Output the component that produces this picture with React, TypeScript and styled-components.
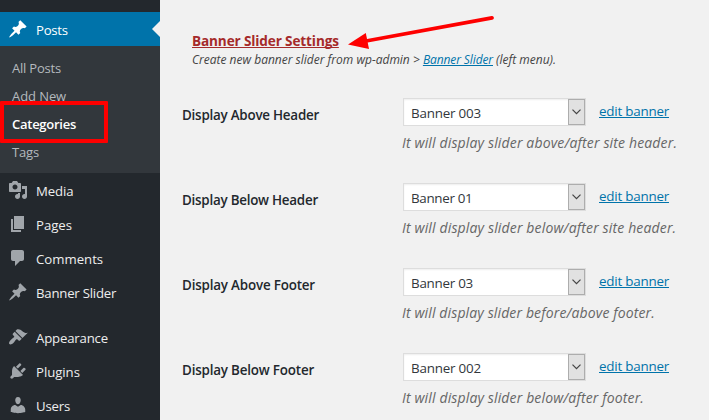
import React from "react";
import styled, { createGlobalStyle } from "styled-components";

const GlobalStyle = createGlobalStyle`
  *, *::before, *::after { box-sizing: border-box; }
  body {
    margin: 0;
    overflow: hidden;
    background: #f1f1f1;
    font-family: "Open Sans", "Noto Sans", sans-serif;
  }
`;

const Page = styled.div`
  display: flex;
  position: relative;
  width: 709px;
  height: 420px;
  overflow: hidden;
  background: #f1f1f1;
`;

const Sidebar = styled.nav`
  flex: none;
  width: 160px;
  height: 420px;
  padding-top: 12px;
  overflow: hidden;
  background: #23282d;
`;

const MenuRow = styled.div<{ $active?: boolean }>`
  position: relative;
  display: flex;
  align-items: center;
  gap: 8px;
  height: 34px;
  padding-left: 8px;
  color: ${(p) => (p.$active ? "#fff" : "#eee")};
  background: ${(p) => (p.$active ? "#0073aa" : "transparent")};
`;

const MenuLabel = styled.span<{ $track: number }>`
  font-size: 13.2px;
  line-height: 18px;
  padding-top: 1px;
  white-space: nowrap;
  letter-spacing: ${(p) => p.$track}px;
`;

const Notch = styled.span`
  position: absolute;
  right: 0;
  top: 9px;
  border: 8px solid transparent;
  border-left-width: 0;
  border-right-color: #f1f1f1;
`;

const MenuIcon = styled.svg<{ $active?: boolean }>`
  flex: none;
  width: 20px;
  height: 20px;
  fill: ${(p) => (p.$active ? "#fff" : "#a0a5aa")};
`;

const Separator = styled.div`
  height: 11px;
`;

const SubMenu = styled.div`
  height: 127px;
  padding: 8px 0 7px 12px;
  background: #32373c;
`;

const SubItem = styled.div<{ $current?: boolean; $track: number }>`
  height: 28px;
  font-size: 13px;
  line-height: 28px;
  font-weight: ${(p) => (p.$current ? 600 : 400)};
  color: ${(p) => (p.$current ? "#fff" : "#b4b9be")};
  letter-spacing: ${(p) => p.$track}px;
`;

const Highlight = styled.div`
  position: absolute;
  left: 0;
  top: 101px;
  width: 108px;
  height: 42px;
  border: 4px solid #fe0000;
  border-radius: 1px;
`;

const PointerArrow = styled.svg`
  position: absolute;
  left: 340px;
  top: 10px;
  width: 160px;
  height: 44px;
`;

const Content = styled.main`
  flex: 1;
  padding-left: 22px;
`;

const Intro = styled.header`
  height: 83px;
  padding: 31px 0 0 10px;
`;

const Title = styled.h2`
  margin: 0 0 1px;
  font-size: 13.6px;
  font-weight: 700;
  line-height: 19px;
  letter-spacing: -0.14px;
  color: #a52a2a;
  text-decoration: underline;
  text-decoration-skip-ink: none;
  text-decoration-thickness: 1px;
  text-underline-offset: 1px;
`;

const Summary = styled.p`
  margin: 0;
  font-size: 12px;
  font-style: italic;
  line-height: 18px;
  white-space: nowrap;
  color: #444;
`;

const Link = styled.a<{ $track: number }>`
  color: #0073aa;
  letter-spacing: ${(p) => p.$track}px;
  text-decoration: underline;
  text-decoration-skip-ink: none;
  text-decoration-thickness: 1px;
  text-underline-offset: 1px;
`;

const SettingRow = styled.section`
  display: grid;
  grid-template-columns: 220px 1fr;
  height: 85px;
  padding-top: 15px;
`;

const SettingLabel = styled.label<{ $track: number }>`
  padding-top: 8px;
  font-size: 13.4px;
  font-weight: 600;
  line-height: 18px;
  color: #23282d;
  letter-spacing: ${(p) => p.$track}px;
`;

const Control = styled.div`
  display: flex;
  gap: 13px;
  padding-left: 1px;
  font-size: 13.4px;
`;

const SelectBox = styled.div`
  display: flex;
  width: 183px;
  height: 28px;
  border: 1px solid #ddd;
  background: #fff;
  box-shadow: inset 0 1px 2px rgba(0, 0, 0, 0.07);
`;

const SelectValue = styled.span<{ $track: number }>`
  flex: 1;
  padding-left: 7px;
  line-height: 28px;
  color: #32373c;
  letter-spacing: ${(p) => p.$track}px;
`;

const SelectButton = styled.span`
  display: flex;
  align-items: center;
  justify-content: center;
  width: 17px;
  height: 26px;
  border: 1px solid #adadad;
  background: #e1e1e1;
`;

const EditSlot = styled.span`
  line-height: 26px;
  white-space: nowrap;
`;

const Help = styled.p<{ $track: number }>`
  margin: 7px 0 0;
  font-size: 14px;
  font-style: italic;
  line-height: 20px;
  white-space: nowrap;
  color: #666;
  letter-spacing: ${(p) => p.$track}px;
`;

const ICONS = {
  pin: "M10.44 3.02l1.82-1.82 6.36 6.35-1.83 1.82c-1.05-.68-2.48-.57-3.41.36l-.75.75c-.92.93-1.04 2.35-.35 3.41l-1.83 1.82-2.41-2.41-2.8 2.79c-.42.42-3.38 2.71-3.8 2.29s1.86-3.39 2.28-3.81l2.79-2.79L4.1 9.36l1.83-1.82c1.05.69 2.48.57 3.4-.36l.75-.75c.93-.92 1.05-2.35.36-3.41z",
  media: "M13 11V4c0-.55-.45-1-1-1h-1.67L9 1H5L3.67 3H2c-.55 0-1 .45-1 1v7c0 .55.45 1 1 1h10c.55 0 1-.45 1-1zM7 4.5c1.38 0 2.5 1.12 2.5 2.5S8.38 9.5 7 9.5 4.5 8.38 4.5 7 5.62 4.5 7 4.5zM14 6h5v10.5c0 1.38-1.12 2.5-2.5 2.5S14 17.88 14 16.5s1.12-2.5 2.5-2.5c.17 0 .34.02.5.05V9h-3V6zm-4 8.05V13h2v3.5c0 1.38-1.12 2.5-2.5 2.5S7 17.88 7 16.5 8.12 14 9.5 14c.17 0 .34.02.5.05z",
  page: "M6 15V2h10v13H6zm-1 1h8v2H3V5h2v11z",
  comment: "M5 2h9c1.1 0 2 .9 2 2v7c0 1.1-.9 2-2 2h-2l-5 5v-5H5c-1.1 0-2-.9-2-2V4c0-1.1.9-2 2-2z",
  brush: "M14.48 11.06L7.41 3.99l1.5-1.5c.5-.56 2.3-.47 3.51.32 1.21.8 1.43 1.28 2.91 2.1 1.18.64 2.45 1.26 4.45.85zm-.71.71L6.7 4.7 4.93 6.47c-.39.39-.39 1.02 0 1.41l1.06 1.06c.39.39.39 1.03 0 1.42-.6.6-1.43 1.11-2.21 1.69-.35.26-.7.53-1.01.84C1.43 14.23.4 16.08 1.4 17.07c.99 1 2.84-.03 4.18-1.36.31-.31.58-.66.85-1.02.57-.78 1.08-1.61 1.69-2.21.39-.39 1.02-.39 1.41 0l1.06 1.06c.39.39 1.02.39 1.41 0z",
  plug: "M13.11 4.36L9.87 7.6 8 5.73l3.24-3.24c.35-.34 1.05-.2 1.56.32.52.51.66 1.21.31 1.55zm-8 1.77l.91-1.12 9.01 9.01-1.19.84c-.71.71-2.63 1.16-3.82 1.16H6.14L4.9 17.26c-.59.59-1.54.59-2.12 0-.59-.58-.59-1.53 0-2.12l1.24-1.24v-3.88c0-1.13.4-3.19 1.09-3.89zm7.26 3.97l3.24-3.24c.34-.35 1.04-.21 1.55.31.52.51.66 1.21.31 1.55l-3.24 3.25z",
  user: "M10 9.25c-2.27 0-2.73-3.44-2.73-3.44C7 4.02 7.82 2 9.97 2c2.16 0 2.98 2.02 2.71 3.81 0 0-.41 3.44-2.68 3.44zm0 2.57L12.72 10c2.39 0 4.52 2.33 4.52 4.53v2.49s-3.65 1.13-7.24 1.13c-3.65 0-7.24-1.13-7.24-1.13v-2.49c0-2.25 1.94-4.48 4.47-4.48z",
};

type IconName = keyof typeof ICONS;

interface MenuItemProps {
  icon: IconName;
  label: string;
  track: number;
  active?: boolean;
}

function MenuItem({ icon, label, track, active }: MenuItemProps) {
  return (
    <MenuRow $active={active}>
      <MenuIcon viewBox="0 0 20 20" $active={active}>
        <path d={ICONS[icon]} />
      </MenuIcon>
      <MenuLabel $track={track}>{label}</MenuLabel>
      {active && <Notch />}
    </MenuRow>
  );
}

const CONTENT_MENU: MenuItemProps[] = [
  { icon: "media", label: "Media", track: -0.1 },
  { icon: "page", label: "Pages", track: -0.05 },
  { icon: "comment", label: "Comments", track: 0 },
  { icon: "pin", label: "Banner Slider", track: -0.22 },
];

const ADMIN_MENU: MenuItemProps[] = [
  { icon: "brush", label: "Appearance", track: -0.18 },
  { icon: "plug", label: "Plugins", track: -0.05 },
  { icon: "user", label: "Users", track: -0.2 },
];

const POSTS_MENU = [
  { label: "All Posts", track: -0.2 },
  { label: "Add New", track: -0.08 },
  { label: "Categories", track: -0.26, current: true },
  { label: "Tags", track: -0.15 },
];

const SETTINGS = [
  { label: "Display Above Header", labelTrack: -0.23, value: "Banner 003", valueTrack: -0.2, help: "It will display slider above/after site header.", helpTrack: 0.15 },
  { label: "Display Below Header", labelTrack: -0.24, value: "Banner 01", valueTrack: -0.33, help: "It will display slider below/after site header.", helpTrack: 0.15 },
  { label: "Display Above Footer", labelTrack: -0.18, value: "Banner 03", valueTrack: -0.26, help: "It will display slider before/above footer.", helpTrack: 0.13 },
  { label: "Display Below Footer", labelTrack: -0.18, value: "Banner 002", valueTrack: -0.2, help: "It will display slider below/after footer.", helpTrack: 0.14 },
];

export default function App() {
  return (
    <Page>
      <GlobalStyle />
      <Sidebar>
        <MenuItem icon="pin" label="Posts" track={-0.3} active />
        <SubMenu>
          {POSTS_MENU.map((item) => (
            <SubItem key={item.label} $current={item.current} $track={item.track}>
              {item.label}
            </SubItem>
          ))}
        </SubMenu>
        {CONTENT_MENU.map((item) => (
          <MenuItem key={item.label} {...item} />
        ))}
        <Separator />
        {ADMIN_MENU.map((item) => (
          <MenuItem key={item.label} {...item} />
        ))}
      </Sidebar>
      <Content>
        <Intro>
          <Title>Banner Slider Settings</Title>
          <Summary>
            Create new banner slider from wp-admin &gt; <Link $track={-0.1}>Banner Slider</Link> (left menu).
          </Summary>
        </Intro>
        {SETTINGS.map((s) => (
          <SettingRow key={s.label}>
            <SettingLabel $track={s.labelTrack}>{s.label}</SettingLabel>
            <div>
              <Control>
                <SelectBox>
                  <SelectValue $track={s.valueTrack}>{s.value}</SelectValue>
                  <SelectButton>
                    <svg width="9" height="6" viewBox="0 0 9 6" fill="none" stroke="#444" strokeWidth="1.2">
                      <path d="M0.5 0.7L4.5 4.7L8.5 0.7" />
                    </svg>
                  </SelectButton>
                </SelectBox>
                <EditSlot>
                  <Link $track={-0.22}>edit banner</Link>
                </EditSlot>
              </Control>
              <Help $track={s.helpTrack}>{s.help}</Help>
            </div>
          </SettingRow>
        ))}
      </Content>
      <Highlight />
      <PointerArrow viewBox="340 10 160 44">
        <path d="M492 17.8L366 41" stroke="#fe0000" strokeWidth="3.8" strokeLinecap="round" />
        <path d="M348 44.5L365.8 33L369 49z" fill="#fe0000" />
      </PointerArrow>
    </Page>
  );
}
